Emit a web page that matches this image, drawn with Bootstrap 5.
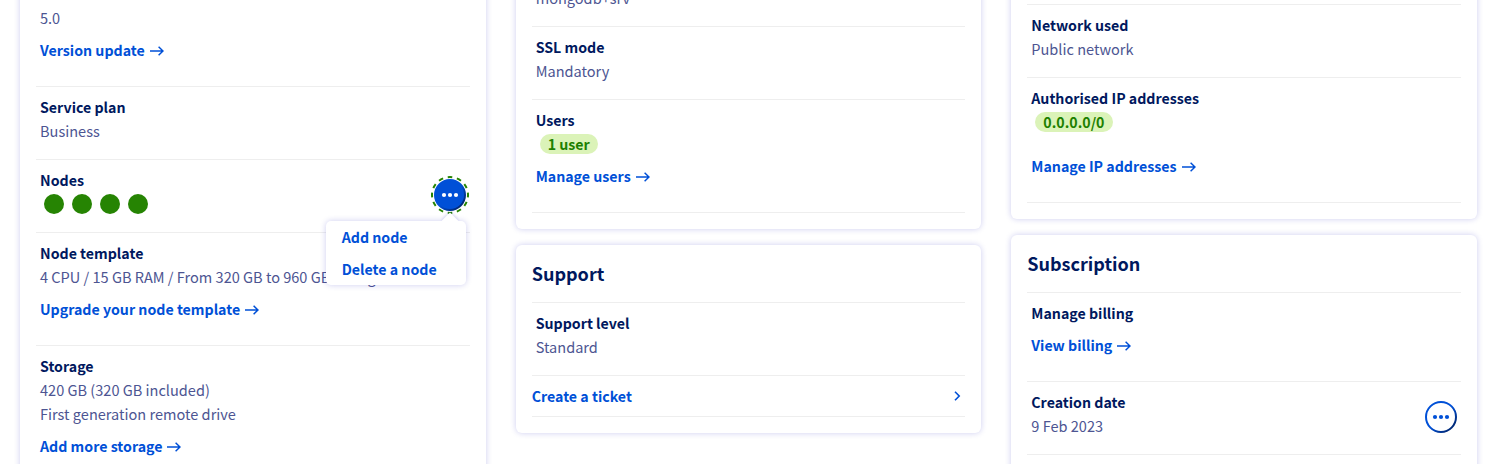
<!DOCTYPE html>
<html lang="en">
<head>
<meta charset="utf-8">
<meta name="viewport" content="width=device-width, initial-scale=1">
<title>Database service</title>
<link href="https://cdn.jsdelivr.net/npm/bootstrap@5.3.0/dist/css/bootstrap.min.css" rel="stylesheet">
<style>
body{font-family:"Noto Sans CJK SC","Noto Sans",sans-serif;font-size:14.55px;line-height:24px;color:#4d5592;background:#fff;height:464px;overflow:hidden}
.board{padding:0 20px;height:464px;overflow:hidden}
.board>.row{--bs-gutter-x:30px}
.tile{background:#fff;border-radius:6px;box-shadow:0 0 6px rgba(0,0,180,.2);padding:16px}
.tile+.tile{margin-top:16px}
.tile h2{font-size:18.05px;line-height:25px;font-weight:700;color:#00185e;margin:0;padding:0 0 16px}
.tile-cut{margin-top:-20px}
.col-a .tile-cut{padding-top:26px;height:520px}
.col-b .tile-cut{margin-top:-30px}
.col-c .tile-cut{padding-top:24px}
.col-c .tile:last-child{height:260px}
.item{border-top:1px solid #eee;padding:8px 4px 16px}
.item.first{border-top:0;padding-top:0}
.item.wide{padding:8px 0}
.items{border-bottom:1px solid #eee}
.term{font-size:14.2px;font-weight:700;color:#00185e}
.go{display:block;width:max-content;font-size:14.2px;font-weight:700;color:#0050d7;text-decoration:none;margin:8px 0}
.go svg{margin-left:5px;vertical-align:.5px}
.wide .go{margin:0}
.pill{font-size:14.2px;line-height:20px;height:20px;margin:2px 4px;padding:0 8px;border-radius:10px;background:#dbf3b8;color:#1e8000;font-weight:700;width:max-content}
.dot{width:20px;height:20px;border-radius:50%;background:#268403;margin:2px 4px}
.more{border:0;background:none;padding:0;width:38px;height:38px;margin:-1px -3px 0 0}
.more svg{display:block}
.pop{position:absolute;right:0;top:53px;width:140px;height:64px;background:#fff;border-radius:5px;box-shadow:0 0 6px rgba(0,0,180,.2);padding:4px 16px;z-index:2}
.pop::before{content:"";position:absolute;left:118px;top:-6px;width:12px;height:12px;background:#fff;transform:rotate(45deg);box-shadow:-1px -1px 3px rgba(0,0,180,.14);clip-path:polygon(-4px -4px,16px -4px,-4px 16px)}
.pop .go{margin:0 0 8px}
</style>
</head>
<body>
<svg width="0" height="0" class="position-absolute">
<defs>
<linearGradient id="edge" x1=".15" y1=".15" x2=".85" y2=".85"><stop offset=".5" stop-color="#0050d7"/><stop offset="1" stop-color="#002a7a"/></linearGradient>
<symbol id="arrow" viewBox="0 0 14 10"><path d="M0 5H13M8.6.8 13 5 8.6 9.2" fill="none" stroke="#0050d7" stroke-width="1.5"/></symbol>
</defs>
</svg>
<main class="board">
<div class="row">
  <div class="col-4 col-a">
    <section class="tile tile-cut">
      <div class="item first"><div>5.0</div><a class="go" href="#">Version update<svg width="14" height="10"><use href="#arrow"/></svg></a></div>
      <div class="item"><div class="term">Service plan</div><div>Business</div></div>
      <div class="item d-flex justify-content-between position-relative">
        <div><div class="term">Nodes</div><div class="d-flex"><span class="dot"></span><span class="dot"></span><span class="dot"></span><span class="dot"></span></div></div>
        <button class="more align-self-start mt-2" aria-label="Node actions"><svg width="38" height="38" viewBox="0 0 38 38"><circle cx="19" cy="19" r="18" fill="none" stroke="#268403" stroke-width="2" pathLength="120" stroke-dasharray="5 5" stroke-dashoffset="2.5"/><circle cx="19" cy="19" r="15" fill="#0050d7" stroke="url(#edge)" stroke-width="2"/><g fill="#fff"><circle cx="13" cy="19" r="2.1"/><circle cx="19" cy="19" r="2.1"/><circle cx="25" cy="19" r="2.1"/></g></svg></button>
        <div class="pop me-1 mt-2"><a class="go" href="#">Add node</a><a class="go" href="#">Delete a node</a></div>
      </div>
      <div class="item"><div class="term">Node template</div><div>4 CPU / 15 GB RAM / From 320 GB to 960 GB storage</div><a class="go" href="#">Upgrade your node template<svg width="14" height="10"><use href="#arrow"/></svg></a></div>
      <div class="item"><div class="term">Storage</div><div>420 GB (320 GB included)</div><div>First generation remote drive</div><a class="go" href="#">Add more storage<svg width="14" height="10"><use href="#arrow"/></svg></a></div>
    </section>
  </div>
  <div class="col-4 col-b">
    <section class="tile tile-cut">
      <div class="items">
        <div class="item first">mongodb+srv</div>
        <div class="item"><div class="term">SSL mode</div><div>Mandatory</div></div>
        <div class="item"><div class="term">Users</div><div class="d-flex"><span class="pill">1 user</span></div><a class="go" href="#">Manage users<svg width="14" height="10"><use href="#arrow"/></svg></a></div>
      </div>
    </section>
    <section class="tile">
      <h2>Support</h2>
      <div class="items">
        <div class="item"><div class="term">Support level</div><div>Standard</div></div>
        <div class="item wide d-flex justify-content-between align-items-center"><a class="go" href="#">Create a ticket</a><svg width="7" height="10" viewBox="0 0 7 10" class="me-1"><path d="M1 .8 5.2 5 1 9.2" fill="none" stroke="#0050d7" stroke-width="1.6"/></svg></div>
      </div>
    </section>
  </div>
  <div class="col-4 col-c">
    <section class="tile tile-cut">
      <div class="items">
        <div class="item"><div class="term">Network used</div><div>Public network</div></div>
        <div class="item"><div class="term">Authorised IP addresses</div><div class="d-flex"><span class="pill">0.0.0.0/0</span></div><a class="go mt-3 pt-1" href="#">Manage IP addresses<svg width="14" height="10"><use href="#arrow"/></svg></a></div>
      </div>
    </section>
    <section class="tile">
      <h2>Subscription</h2>
      <div class="items">
        <div class="item"><div class="term">Manage billing</div><a class="go" href="#">View billing<svg width="14" height="10"><use href="#arrow"/></svg></a></div>
        <div class="item d-flex justify-content-between"><div><div class="term">Creation date</div><div>9 Feb 2023</div></div>
        <button class="more align-self-start mt-2" aria-label="Subscription actions"><svg width="38" height="38" viewBox="0 0 38 38"><circle cx="19" cy="19" r="15" fill="#fff" stroke="url(#edge)" stroke-width="2"/><g fill="#0050d7"><circle cx="13" cy="19" r="2.1"/><circle cx="19" cy="19" r="2.1"/><circle cx="25" cy="19" r="2.1"/></g></svg></button></div>
      </div>
    </section>
  </div>
</div>
</main>
<script src="https://cdn.jsdelivr.net/npm/bootstrap@5.3.0/dist/js/bootstrap.bundle.min.js"></script>
</body>
</html>
